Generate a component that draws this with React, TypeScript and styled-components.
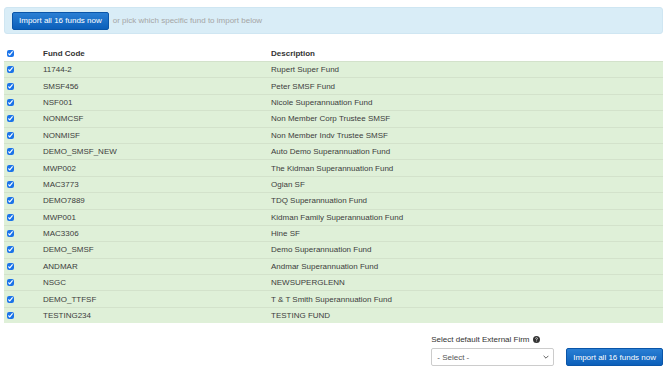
import styled, { createGlobalStyle } from "styled-components";
import { BsQuestionCircleFill } from "react-icons/bs";

const funds = [
  ["11744-2", "Rupert Super Fund"],
  ["SMSF456", "Peter SMSF Fund"],
  ["NSF001", "Nicole Superannuation Fund"],
  ["NONMCSF", "Non Member Corp Trustee SMSF"],
  ["NONMISF", "Non Member Indv Trustee SMSF"],
  ["DEMO_SMSF_NEW", "Auto Demo Superannuation Fund"],
  ["MWP002", "The Kidman Superannuation Fund"],
  ["MAC3773", "Ogian SF"],
  ["DEMO7889", "TDQ Superannuation Fund"],
  ["MWP001", "Kidman Family Superannuation Fund"],
  ["MAC3306", "Hine SF"],
  ["DEMO_SMSF", "Demo Superannuation Fund"],
  ["ANDMAR", "Andmar Superannuation Fund"],
  ["NSGC", "NEWSUPERGLENN"],
  ["DEMO_TTFSF", "T & T Smith Superannuation Fund"],
  ["TESTING234", "TESTING FUND"],
];

const App = () => {
  return (
    <>
      <GlobalStyle />
      <Page>
        <InfoBox>
          <ImportButton>Import all {funds.length} funds now</ImportButton>
          <Hint>or pick which specific fund to import below</Hint>
        </InfoBox>

        <FundTable>
          <Row>
            <Cell><Check type="checkbox" defaultChecked /></Cell>
            <HeadCell>Fund Code</HeadCell>
            <HeadCell>Description</HeadCell>
          </Row>
          {funds.map(([code, desc]) => (
            <Row key={code} selected>
              <Cell><Check type="checkbox" defaultChecked /></Cell>
              <Cell>{code}</Cell>
              <Cell>{desc}</Cell>
            </Row>
          ))}
        </FundTable>

        <Footer>
          <FirmField>
            <Label>
              Select default External Firm <HelpIcon />
            </Label>
            <SelectWrap>
              <Select defaultValue="">
                <option value="">- Select -</option>
              </Select>
              <Chevron viewBox="0 0 10 6">
                <path d="M1 1l4 4 4-4" fill="none" stroke="#444" strokeWidth="1.4" />
              </Chevron>
            </SelectWrap>
          </FirmField>
          <ImportButton>Import all {funds.length} funds now</ImportButton>
        </Footer>
      </Page>
    </>
  );
};

const GlobalStyle = createGlobalStyle`
  body {
    margin: 0;
    background: #fff;
    font-family: "Liberation Sans", Arial, sans-serif;
    font-size: 8px;
    color: #444;
  }
`;

const Page = styled.div`
  padding: 7px 6px 0 4px;
`;

const InfoBox = styled.div`
  display: flex;
  align-items: center;
  gap: 4px;
  height: 27px;
  box-sizing: border-box;
  padding: 0 7px;
  background: #d9edf7;
  border: 1px solid #cfe6f2;
  border-radius: 3px;
`;

const ImportButton = styled.button`
  height: 18px;
  padding: 0 6px;
  font-family: inherit;
  font-size: 8px;
  color: #fff;
  background: linear-gradient(#2a7fd4, #0b5fba);
  border: 1px solid #0a55a8;
  border-radius: 2px;
  white-space: nowrap;
`;

const Hint = styled.span`
  color: #a5a5a5;
`;

const FundTable = styled.div`
  margin-top: 11px;
`;

const Row = styled.div<{ selected?: boolean }>`
  display: grid;
  grid-template-columns: 39px 228px 1fr;
  align-items: center;
  box-sizing: border-box;
  height: ${({ selected }) => (selected ? "16.4px" : "16px")};
  background: ${({ selected }) => (selected ? "#dff0d8" : "transparent")};
  border-top: ${({ selected }) => (selected ? "1px solid #d3e2cb" : "none")};
`;

const Cell = styled.div`
  display: flex;
  align-items: center;
  color: #3d3d3d;
  white-space: nowrap;
`;

const HeadCell = styled(Cell)`
  font-weight: bold;
  color: #333;
`;

const Check = styled.input`
  width: 7px;
  height: 7px;
  margin: 0 0 0 3px;
  accent-color: #1a73e8;
`;

const Footer = styled.div`
  display: flex;
  justify-content: flex-end;
  align-items: flex-end;
  gap: 12px;
  margin-top: 12px;
`;

const FirmField = styled.div`
  display: flex;
  flex-direction: column;
  gap: 4px;
`;

const Label = styled.div`
  display: flex;
  align-items: center;
  gap: 3px;
  color: #333;
`;

const HelpIcon = styled(BsQuestionCircleFill)`
  width: 7px;
  height: 7px;
  color: #333;
`;

const SelectWrap = styled.div`
  position: relative;
  width: 123px;
`;

const Select = styled.select`
  appearance: none;
  width: 100%;
  height: 18px;
  padding: 0 5px;
  font-family: inherit;
  font-size: 8px;
  color: #555;
  background: #fff;
  border: 1px solid #ccc;
  border-radius: 2px;
`;

const Chevron = styled.svg`
  position: absolute;
  right: 5px;
  top: 7px;
  width: 6px;
  height: 4px;
  pointer-events: none;
`;

export default App;
